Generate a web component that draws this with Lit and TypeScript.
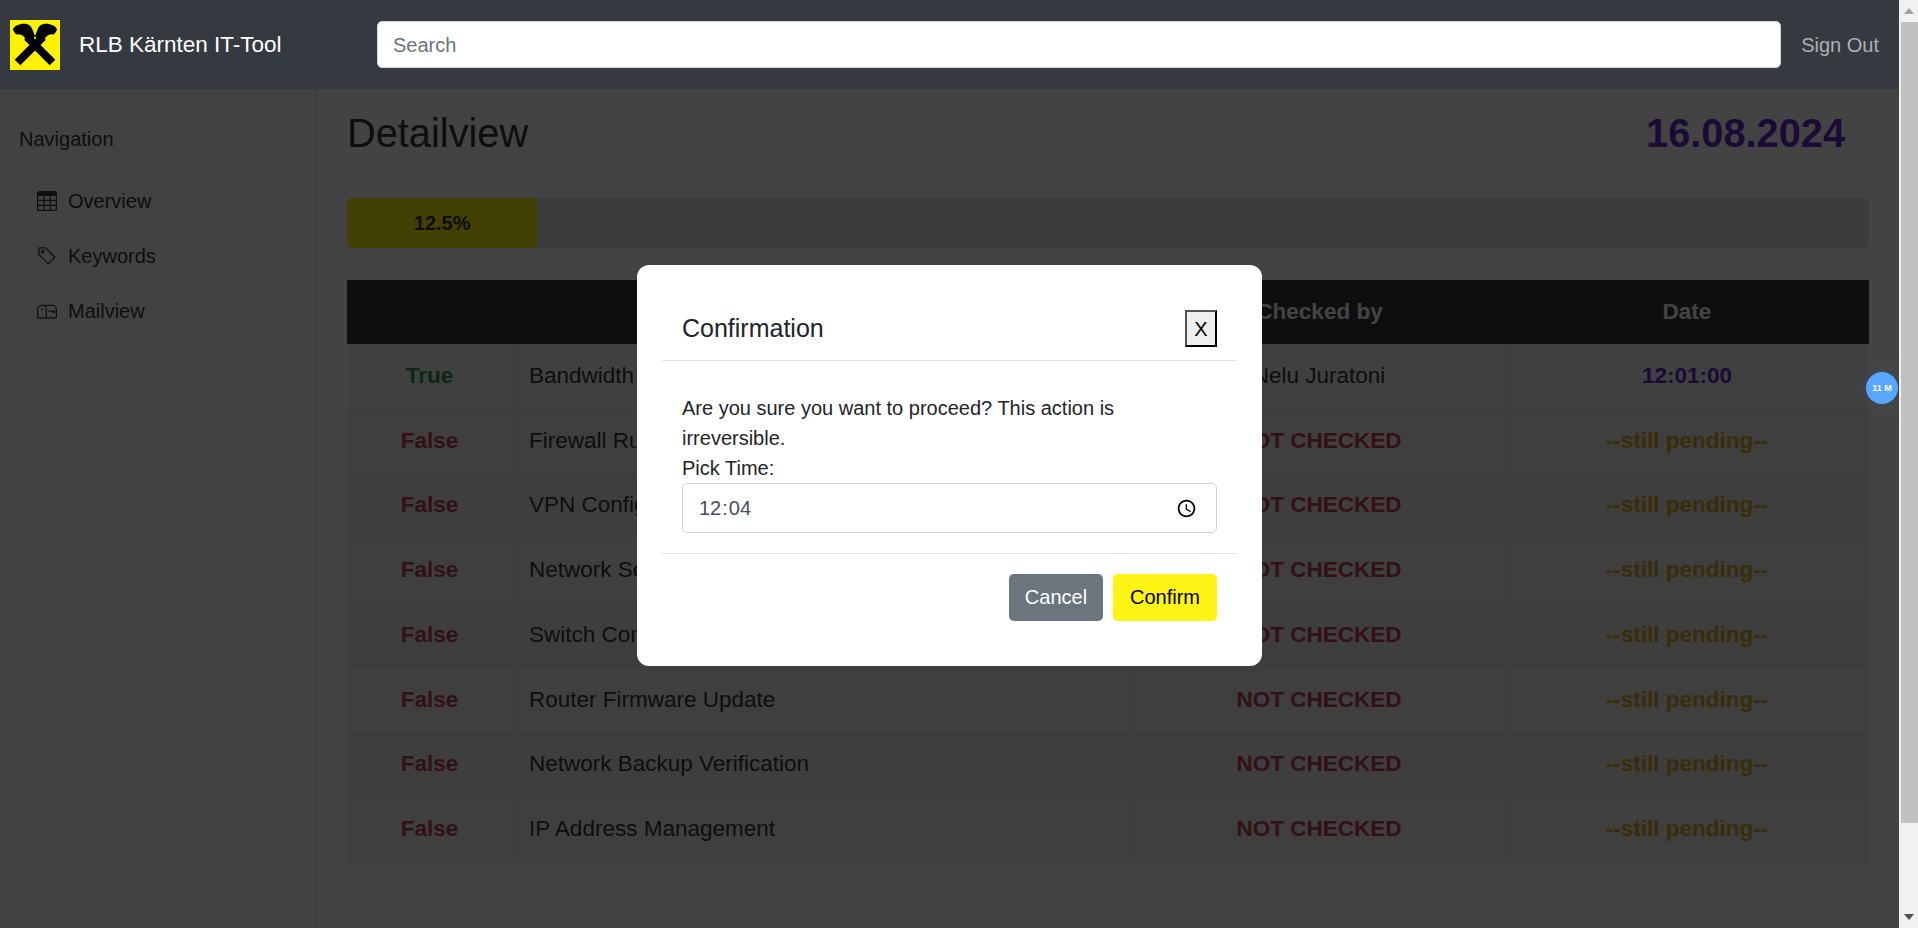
import { LitElement, html, css } from 'lit';
import { customElement } from 'lit/decorators.js';
import { map } from 'lit/directives/map.js';

interface Check {
  ok: boolean;
  task: string;
  by: string;
  date: string;
}

const checks: Check[] = [
  { ok: true, task: 'Bandwidth Monitoring', by: 'Nelu Juratoni', date: '12:01:00' },
  { ok: false, task: 'Firewall Rules Review', by: 'NOT CHECKED', date: '--still pending--' },
  { ok: false, task: 'VPN Configuration Check', by: 'NOT CHECKED', date: '--still pending--' },
  { ok: false, task: 'Network Security Scan', by: 'NOT CHECKED', date: '--still pending--' },
  { ok: false, task: 'Switch Configuration', by: 'NOT CHECKED', date: '--still pending--' },
  { ok: false, task: 'Router Firmware Update', by: 'NOT CHECKED', date: '--still pending--' },
  { ok: false, task: 'Network Backup Verification', by: 'NOT CHECKED', date: '--still pending--' },
  { ok: false, task: 'IP Address Management', by: 'NOT CHECKED', date: '--still pending--' },
];

@customElement('app-root')
export class AppRoot extends LitElement {
  static styles = css`
    :host {
      display: flex;
      height: 928px;
      overflow: hidden;
      font-family: 'Liberation Sans', Arial, sans-serif;
      font-size: 20px;
      line-height: 30px;
      color: #212529;
    }

    * {
      box-sizing: border-box;
    }

    .page {
      position: relative;
      width: 1899px;
      height: 928px;
      background: #fff;
      overflow: hidden;
    }

    /* header sits above the backdrop */
    .navbar {
      position: relative;
      z-index: 2;
      display: flex;
      align-items: center;
      height: 89px;
      background: #343a40;
      box-shadow: inset 0 1px 0 #3d3f42;
    }

    .brand {
      display: flex;
      align-items: center;
      gap: 19px;
      width: 377px;
      padding-left: 10px;
      color: #fff;
      font-size: 22.5px;
    }

    .logo {
      display: block;
      width: 50px;
      height: 50px;
      margin-top: 1px;
    }

    .search {
      flex: 1;
      height: 47px;
      padding: 1px 15px 0;
      border: 1px solid #ced4da;
      border-radius: 5px;
      background: #fff;
      font: inherit;
      color: #495057;
    }

    .search::placeholder {
      color: #6c757d;
    }

    .signout {
      margin: 0 20px;
      color: rgba(255, 255, 255, 0.6);
    }

    .layout {
      display: flex;
      height: 839px;
    }

    .sidebar {
      width: 317px;
      padding-top: 35px;
      background: #f8f9fa;
      border-right: 1px solid #dee2e6;
    }

    .nav-title {
      padding-left: 19px;
      margin-bottom: 19px;
    }

    .nav-link {
      display: flex;
      align-items: center;
      gap: 11px;
      height: 55px;
      padding-left: 37px;
    }

    .nav-link svg {
      width: 20px;
      height: 20px;
      fill: currentColor;
    }

    .main {
      flex: 1;
      min-width: 0;
      padding: 0 30px;
    }

    .title-row {
      display: flex;
      justify-content: space-between;
      align-items: center;
      height: 89px;
      padding: 0 24px 1px 0;
      border-bottom: 1px solid #dee2e6;
    }

    h2 {
      margin: 0;
      font-size: 39.75px;
      font-weight: 400;
      line-height: 48px;
    }

    .date {
      font-size: 39.75px;
      font-weight: 700;
      line-height: 48px;
      color: #5a10c8;
    }

    .progress {
      height: 50px;
      margin: 20px 0 32px;
      border-radius: 5px;
      background: #dcdfe6;
      overflow: hidden;
    }

    .progress-bar {
      height: 100%;
      background: #fff200;
      font-weight: 700;
      line-height: 50px;
      text-align: center;
    }

    table {
      width: 100%;
      table-layout: fixed;
      border-collapse: separate;
      border-spacing: 0;
      font-size: 22.5px;
    }

    th {
      height: 64px;
      padding: 0 16px;
      background: #212529;
      color: #fff;
      font-weight: 700;
      text-align: center;
    }

    td {
      height: 64.75px;
      padding: 0 16px;
      border-bottom: 1px solid #d8dcdf;
      border-right: 1px solid #d8dcdf;
      text-align: center;
      font-weight: 700;
    }

    td:last-child {
      border-right: 0;
    }

    td.task {
      text-align: left;
      font-weight: 400;
    }

    td.name {
      font-weight: 400;
    }

    tbody tr:nth-child(odd) {
      background: #e8e8e8;
    }

    tbody tr:nth-child(even) {
      background: #e9eeeb;
    }

    tbody tr:first-child {
      background: #f0f0f0;
    }

    .green {
      color: #218838;
    }

    .red {
      color: #bb2d3b;
    }

    .purple {
      color: #5a10c8;
    }

    .orange {
      color: #d69e10;
    }

    .backdrop {
      position: absolute;
      inset: 0;
      z-index: 1;
      display: flex;
      justify-content: center;
      align-items: flex-start;
      padding-top: 265px;
      background: rgba(8, 8, 8, 0.76);
    }

    .modal {
      width: 625px;
      height: 401px;
      padding: 25px;
      border-radius: 12px;
      background: #fff;
    }

    .modal-header {
      display: flex;
      justify-content: space-between;
      align-items: center;
      padding: 20px 20px 13px;
      border-bottom: 1px solid #dee2e6;
    }

    .modal-title {
      font-size: 25px;
      line-height: 37px;
    }

    .close {
      width: 32px;
      height: 37px;
      padding: 0;
      border: 2px outset #000;
      background: #efefef;
      font: inherit;
      color: #000;
    }

    .modal-body {
      padding: 32px 20px 20px;
    }

    .modal-body p {
      margin: 0;
    }

    .time {
      display: block;
      width: 100%;
      height: 50px;
      padding: 0 16px 0 15px;
      border: 1px solid #ced4da;
      border-radius: 5px;
      background: #fff;
      font: inherit;
      color: #495057;
    }

    /* reference shows the 24h form, the sandbox locale adds AM/PM */
    .time::-webkit-datetime-edit-ampm-field {
      display: none;
    }

    .modal-footer {
      display: flex;
      justify-content: flex-end;
      gap: 10px;
      padding: 20px;
      border-top: 1px solid #dee2e6;
    }

    .btn {
      height: 47px;
      padding: 0 0 2px;
      border: 0;
      border-radius: 5px;
      font: inherit;
    }

    .cancel {
      width: 94px;
      background: #6c757d;
      color: #fff;
    }

    .confirm {
      width: 104px;
      background: #fdf314;
      color: #000;
    }

    .badge {
      position: absolute;
      z-index: 3;
      left: 1866px;
      top: 372px;
      width: 32px;
      height: 32px;
      border-radius: 50%;
      background: #57a6ff;
      box-shadow: 0 0 24px rgba(87, 166, 255, 0.12);
      color: #fff;
      font-size: 9px;
      font-weight: 700;
      line-height: 32px;
      text-align: center;
    }

    .scrollbar {
      display: flex;
      flex-direction: column;
      width: 19px;
      height: 928px;
      background: #f1f1f1;
    }

    .arrow {
      display: flex;
      justify-content: center;
      align-items: center;
      height: 22px;
    }

    .arrow svg {
      display: block;
      width: 10px;
      height: 6px;
    }

    .thumb {
      height: 801px;
      margin-left: 2px;
      background: #c1c1c1;
    }

    .spacer {
      flex: 1;
    }
  `;

  render() {
    return html`
      <div class="page">
        <header class="navbar">
          <div class="brand">
            <svg class="logo" viewBox="0 0 50 50">
              <rect width="50" height="50" fill="#fff200" />
              <path d="M7.5 42.5 33 17M42.5 42.5 17 17" stroke="#000" stroke-width="8" fill="none" />
              <path
                d="M2.8 9.5C4.5 6 9 3.8 14 3.8 18.5 3.8 21 6 22.3 9.3L25 16 21.5 22 15.5 19.5C14.5 17 13 15.5 11 14.8L8.7 14.2C7.2 14.8 5.8 14.6 5.2 13.5Z"
              />
              <path
                d="M47.2 9.5C45.5 6 41 3.8 36 3.8 31.5 3.8 29 6 27.7 9.3L25 16 28.5 22 34.5 19.5C35.5 17 37 15.5 39 14.8L41.3 14.2C42.8 14.8 44.2 14.6 44.8 13.5Z"
              />
            </svg>
            <span>RLB Kärnten IT-Tool</span>
          </div>
          <input class="search" placeholder="Search" />
          <span class="signout">Sign Out</span>
        </header>

        <div class="layout">
          <nav class="sidebar">
            <div class="nav-title">Navigation</div>
            <div class="nav-link">
              <svg viewBox="0 0 16 16">
                <path
                  d="M0 2a2 2 0 0 1 2-2h12a2 2 0 0 1 2 2v12a2 2 0 0 1-2 2H2a2 2 0 0 1-2-2V2zm15 2h-4v3h4V4zm0 4h-4v3h4V8zm0 4h-4v3h3a1 1 0 0 0 1-1v-2zm-5 3v-3H6v3h4zm-5 0v-3H1v2a1 1 0 0 0 1 1h3zm-4-4h4V8H1v3zm0-4h4V4H1v3zm5-3v3h4V4H6zm4 4H6v3h4V8z"
                />
              </svg>
              Overview
            </div>
            <div class="nav-link">
              <svg viewBox="0 0 16 16">
                <path d="M6 4.5a1.5 1.5 0 1 1-3 0 1.5 1.5 0 0 1 3 0zm-1 0a.5.5 0 1 0-1 0 .5.5 0 0 0 1 0z" />
                <path
                  d="M2 1h4.586a1 1 0 0 1 .707.293l7 7a1 1 0 0 1 0 1.414l-4.586 4.586a1 1 0 0 1-1.414 0l-7-7A1 1 0 0 1 1 6.586V2a1 1 0 0 1 1-1zm0 5.586 7 7L13.586 9l-7-7H2v4.586z"
                />
              </svg>
              Keywords
            </div>
            <div class="nav-link">
              <svg viewBox="0 0 16 16">
                <path
                  d="M4 4a3 3 0 0 0-3 3v6h6V7a3 3 0 0 0-3-3zm0-1h8a4 4 0 0 1 4 4v6a1 1 0 0 1-1 1H1a1 1 0 0 1-1-1V7a4 4 0 0 1 4-4zm2.646 1A3.99 3.99 0 0 1 8 7v6h7V7a3 3 0 0 0-3-3H6.646z"
                />
                <path
                  d="M11.793 8.5H9v-1h5a.5.5 0 0 1 .5.5v1a.5.5 0 0 1-.5.5h-1a.5.5 0 0 1-.354-.146l-.853-.854zM5 7c0 .552-.448 0-1 0s-1 .552-1 0a1 1 0 0 1 2 0z"
                />
              </svg>
              Mailview
            </div>
          </nav>

          <main class="main">
            <div class="title-row">
              <h2>Detailview</h2>
              <span class="date">16.08.2024</span>
            </div>

            <div class="progress">
              <div class="progress-bar" style="width: 12.5%">12.5%</div>
            </div>

            <table>
              <colgroup>
                <col style="width: 166px" />
                <col style="width: 621px" />
                <col style="width: 371px" />
                <col style="width: 364px" />
              </colgroup>
              <thead>
                <tr>
                  <th></th>
                  <th></th>
                  <th>Checked by</th>
                  <th>Date</th>
                </tr>
              </thead>
              <tbody>
                ${map(
                  checks,
                  (c) => html`
                    <tr>
                      <td class=${c.ok ? 'green' : 'red'}>${c.ok ? 'True' : 'False'}</td>
                      <td class="task">${c.task}</td>
                      <td class=${c.ok ? 'name' : 'red'}>${c.by}</td>
                      <td class=${c.ok ? 'purple' : 'orange'}>${c.date}</td>
                    </tr>
                  `,
                )}
              </tbody>
            </table>
          </main>
        </div>

        <div class="backdrop">
          <div class="modal">
            <div class="modal-header">
              <span class="modal-title">Confirmation</span>
              <button class="close">X</button>
            </div>
            <div class="modal-body">
              <p>Are you sure you want to proceed? This action is irreversible.</p>
              <label>Pick Time:</label>
              <input class="time" type="time" value="12:04" />
            </div>
            <div class="modal-footer">
              <button class="btn cancel">Cancel</button>
              <button class="btn confirm">Confirm</button>
            </div>
          </div>
        </div>

        <div class="badge">11 M</div>
      </div>

      <div class="scrollbar">
        <div class="arrow">
          <svg viewBox="0 0 10 6"><polygon points="5,0 10,6 0,6" fill="#a3a3a3" /></svg>
        </div>
        <div class="thumb"></div>
        <div class="spacer"></div>
        <div class="arrow">
          <svg viewBox="0 0 10 6"><polygon points="0,0 10,0 5,6" fill="#505050" /></svg>
        </div>
      </div>
    `;
  }
}
